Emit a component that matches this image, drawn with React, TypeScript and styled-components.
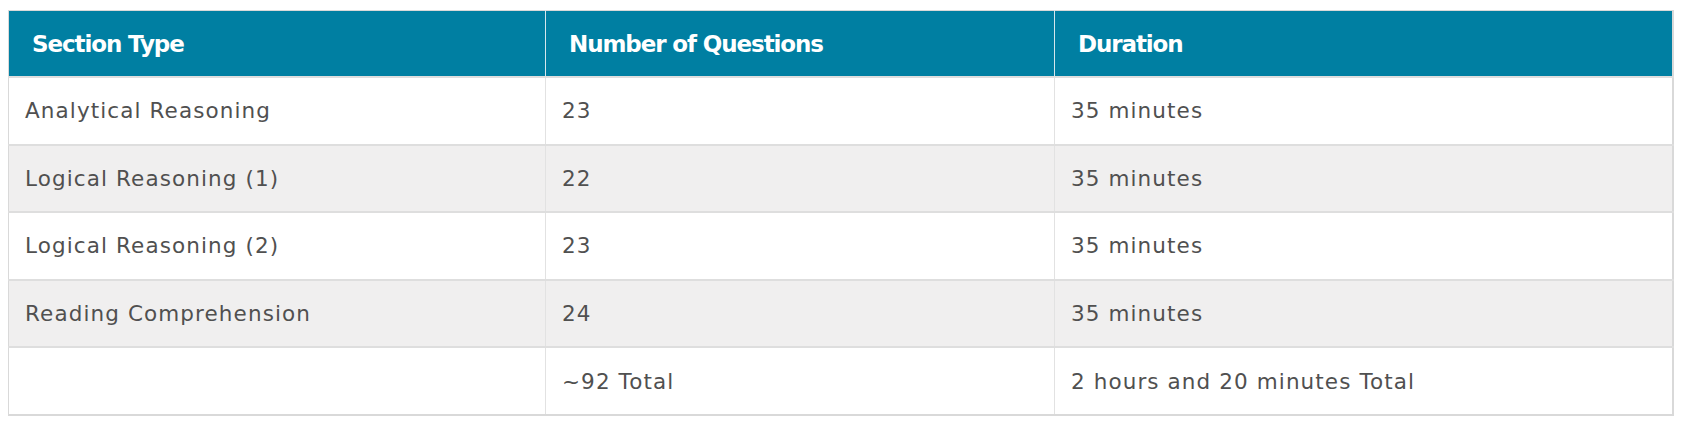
import styled, { createGlobalStyle } from "styled-components"

const GlobalStyle = createGlobalStyle`
    html, body {
        margin: 0;
        padding: 0;
        background: #ffffff;
    }
`

type IExamRow = {
    section: string
    questions: string
    duration: string
    shaded?: boolean
}

const rows: IExamRow[] = [
    { section: "Analytical Reasoning", questions: "23", duration: "35 minutes" },
    { section: "Logical Reasoning (1)", questions: "22", duration: "35 minutes", shaded: true },
    { section: "Logical Reasoning (2)", questions: "23", duration: "35 minutes" },
    { section: "Reading Comprehension", questions: "24", duration: "35 minutes", shaded: true },
    { section: "", questions: "~92 Total", duration: "2 hours and 20 minutes Total" },
]

const Page = styled.div`
    padding: 10px 10px 0 8px;
`

const Table = styled.table`
    width: 1666px;
    border-collapse: collapse;
    border: 1px solid #d9d9d9;
    border-bottom-width: 2px;
    border-right-width: 2px;
    font-family: "DejaVu Sans", "Liberation Sans", sans-serif;
    table-layout: fixed;
`

const HeadCell = styled.th`
    height: 65px;
    padding: 0 0 0 23px;
    background: #007fa2;
    color: #ffffff;
    font-size: 23px;
    font-weight: 700;
    letter-spacing: -1.1px;
    text-align: left;
    border-right: 1px solid #d6e6ec;

    &:last-child {
        border-right: none;
    }
`

const Row = styled.tr<{ $shaded?: boolean }>`
    height: 67.6px;
    background: ${props => props.$shaded ? "#f0efef" : "#ffffff"};
    border-top: 2px solid #dedede;
`

const Cell = styled.td`
    padding: 0 0 0 16px;
    color: #505050;
    font-size: 21.5px;
    font-weight: 400;
    letter-spacing: 1.1px;
    border-right: 1px solid #e2e2e2;

    &:last-child {
        border-right: none;
    }
`

export default function App() {
    return (
        <Page>
            <GlobalStyle />
            <Table>
                <colgroup>
                    <col style={{ width: 537 }} />
                    <col style={{ width: 509 }} />
                    <col />
                </colgroup>
                <thead>
                    <tr>
                        <HeadCell>Section Type</HeadCell>
                        <HeadCell>Number of Questions</HeadCell>
                        <HeadCell>Duration</HeadCell>
                    </tr>
                </thead>
                <tbody>
                    {rows.map((row, i) => (
                        <Row key={i} $shaded={row.shaded}>
                            <Cell>{row.section}</Cell>
                            <Cell>{row.questions}</Cell>
                            <Cell>{row.duration}</Cell>
                        </Row>
                    ))}
                </tbody>
            </Table>
        </Page>
    )
}
